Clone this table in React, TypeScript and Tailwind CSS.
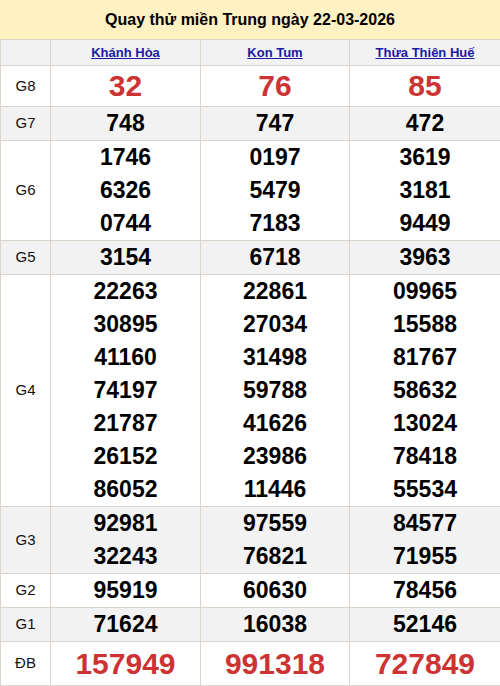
import React from "react";

type Row = { label: string; vals: string[][]; big?: boolean; lh: string; bg: boolean };

const rows: Row[] = [
  { label: "G8", vals: [["32"], ["76"], ["85"]], big: true, lh: "leading-[40px]", bg: false },
  { label: "G7", vals: [["748"], ["747"], ["472"]], lh: "leading-[33px]", bg: true },
  {
    label: "G6",
    vals: [
      ["1746", "6326", "0744"],
      ["0197", "5479", "7183"],
      ["3619", "3181", "9449"],
    ],
    lh: "leading-[33px]",
    bg: false,
  },
  { label: "G5", vals: [["3154"], ["6718"], ["3963"]], lh: "leading-[33px]", bg: true },
  {
    label: "G4",
    vals: [
      ["22263", "30895", "41160", "74197", "21787", "26152", "86052"],
      ["22861", "27034", "31498", "59788", "41626", "23986", "11446"],
      ["09965", "15588", "81767", "58632", "13024", "78418", "55534"],
    ],
    lh: "leading-[33px]",
    bg: false,
  },
  {
    label: "G3",
    vals: [
      ["92981", "32243"],
      ["97559", "76821"],
      ["84577", "71955"],
    ],
    lh: "leading-[33px]",
    bg: true,
  },
  { label: "G2", vals: [["95919"], ["60630"], ["78456"]], lh: "leading-[33px]", bg: false },
  { label: "G1", vals: [["71624"], ["16038"], ["52146"]], lh: "leading-[33px]", bg: true },
  { label: "ĐB", vals: [["157949"], ["991318"], ["727849"]], big: true, lh: "leading-[43px]", bg: false },
];

export default function App() {
  return (
    <div className="w-[500px] bg-white" style={{ fontFamily: '"Liberation Sans", Arial, sans-serif' }}>
      <div className="h-[39px] bg-[#fff1c2] flex items-center justify-center text-[16px] font-bold text-black">
        Quay thử miền Trung ngày 22-03-2026
      </div>
      <table className="w-[500px] table-fixed border-collapse text-center">
        <colgroup>
          <col className="w-[50px]" />
          <col className="w-[150px]" />
          <col className="w-[149px]" />
          <col className="w-[151px]" />
        </colgroup>
        <thead>
          <tr className="bg-[#f2f2f2]">
            <th className="border border-[#dcd4cb] p-0 leading-[25px]"></th>
            {["Khánh Hòa", "Kon Tum", "Thừa Thiên Huế"].map((n) => (
              <th key={n} className="border border-[#dcd4cb] p-0 leading-[25px] text-[13px] font-bold">
                <a className="underline text-[#1a1aa6]">{n}</a>
              </th>
            ))}
          </tr>
        </thead>
        <tbody>
          {rows.map((r) => (
            <tr key={r.label} className={r.bg ? "bg-[#f2f2f2]" : "bg-white"}>
              <td className="border border-[#dcd4cb] p-0 text-[15px] font-normal text-[#111]">{r.label}</td>
              {r.vals.map((col, i) => (
                <td key={i} className="border border-[#dcd4cb] p-0 font-bold">
                  {col.map((v, j) => (
                    <div
                      key={j}
                      className={
                        r.big
                          ? `${r.lh} text-[30px] text-[#cd3333]`
                          : `${r.lh} text-[23px] text-black`
                      }
                    >
                      {v}
                    </div>
                  ))}
                </td>
              ))}
            </tr>
          ))}
        </tbody>
      </table>
    </div>
  );
}
